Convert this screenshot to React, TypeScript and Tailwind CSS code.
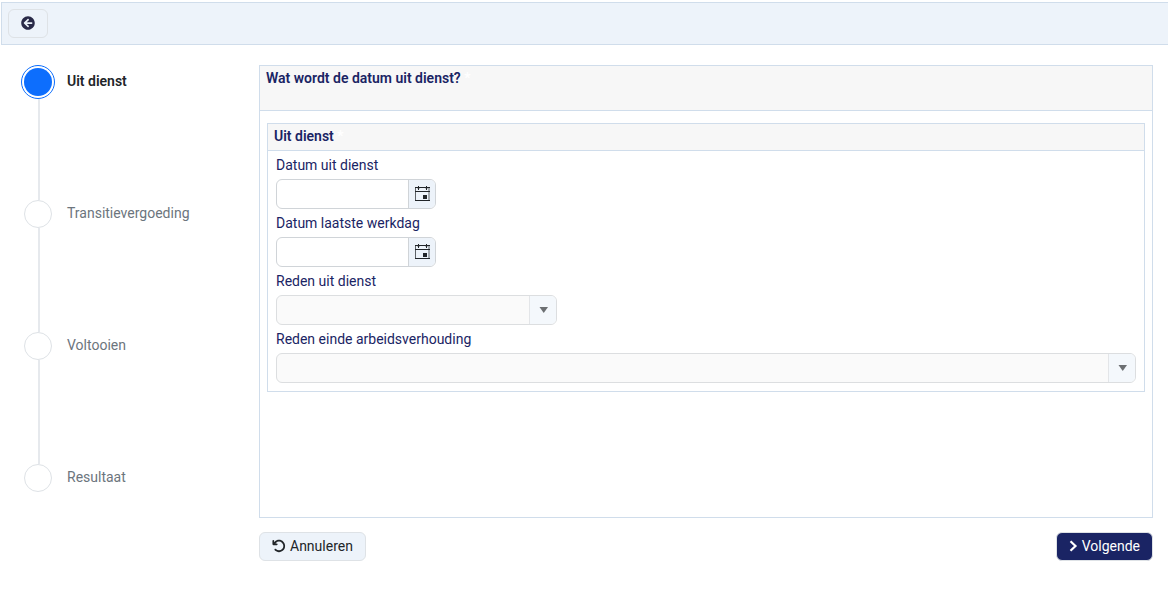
import { useState } from "react";
import { FaArrowCircleLeft } from "react-icons/fa";
import { FaArrowRotateLeft } from "react-icons/fa6";

const steps = ["Uit dienst", "Transitievergoeding", "Voltooien", "Resultaat"];

const CalendarIcon = () => (
  <svg width="16" height="16" viewBox="0 0 16 16" fill="none" aria-hidden="true">
    <path d="M1.5 2v12M15 2v12" stroke="#212529" strokeOpacity="0.7" />
    <path d="M1 1.5h15M1 5.5h15M1 14.5h15" stroke="#212529" />
    <path d="M4.5 0v4M12.5 0v4" stroke="#212529" />
    <path d="M3.5 2.5h2M11.5 2.5h2" stroke="#212529" strokeOpacity="0.5" />
    <path d="M9 9h4v4H9z" fill="#212529" />
  </svg>
);

interface FieldProps {
  id: string;
  label: string;
}

const DateField: React.FC<FieldProps> = ({ id, label }) => {
  const [value, setValue] = useState("");

  return (
    <div>
      <label htmlFor={id} className="block leading-7 text-[#1a2464]">
        {label}
      </label>
      <div className="flex h-[30px] w-40 overflow-hidden rounded-md border border-[#d0d4d8] bg-white">
        <input
          id={id}
          type="text"
          value={value}
          onChange={(e) => setValue(e.target.value)}
          className="min-w-0 flex-1 px-2 outline-none"
        />
        <button
          type="button"
          aria-label={`Kalender ${label}`}
          className="flex w-[27px] items-center justify-center border-l border-[#d0d4d8] bg-[#edf3fa]"
        >
          <CalendarIcon />
        </button>
      </div>
    </div>
  );
};

const SelectField: React.FC<FieldProps & { wide?: boolean }> = ({ id, label, wide }) => (
  <div>
    <label htmlFor={id} className="block leading-7 text-[#1a2464]">
      {label}
    </label>
    <div
      className={`flex h-[30px] overflow-hidden rounded-md border border-[#dcdee0] bg-[#fafafa] ${
        wide ? "w-full" : "w-[281px] max-w-full"
      }`}
    >
      <select id={id} disabled className="min-w-0 flex-1 appearance-none px-2">
        <option value=""></option>
      </select>
      <span className="flex w-[27px] items-center justify-center border-l border-[#e3e5e8] bg-[#f4f8fc]">
        <svg width="10" height="6" viewBox="0 0 10 6" aria-hidden="true">
          <path d="M1.5 0H10L5.75 6z" fill="#6c6f72" />
        </svg>
      </span>
    </div>
  </div>
);

const Stepper = () => (
  <ol className="w-[259px] shrink-0 pl-[21px]">
    {steps.map((step, i) => (
      <li key={step} className="flex gap-3">
        <div className="flex w-[34px] flex-col items-center">
          {i === 0 ? (
            <span className="h-[34px] w-[34px] shrink-0 rounded-full border border-[#0d6efd] p-[2px]">
              <span className="block h-full w-full rounded-full bg-[#0d6efd]"></span>
            </span>
          ) : (
            <span className="h-7 w-7 shrink-0 rounded-full border border-[#dee2e6] bg-white"></span>
          )}
          {i < steps.length - 1 && (
            <span
              className={`ml-[2px] w-[2px] bg-[#e6e9ed] ${i === 0 ? "h-[101px]" : "h-[104px]"}`}
            ></span>
          )}
        </div>
        <span
          className={
            i === 0
              ? "leading-8 font-semibold text-[#212529]"
              : "leading-[26px] text-[#6c757d]"
          }
        >
          {step}
        </span>
      </li>
    ))}
  </ol>
);

const App = () => (
  <div className="min-h-screen bg-white pt-[2px] font-['Roboto',sans-serif] text-sm text-[#212529]">
    <header className="ml-px border border-r-0 border-[#d0ddeb] bg-[#edf3fa] px-[6px] py-[6px]">
      <button
        type="button"
        aria-label="Terug"
        className="flex h-[29px] w-10 items-center justify-center rounded-md border border-[#dee2e6] pb-[2px]"
      >
        <FaArrowCircleLeft size={14} className="text-[#292a48]" />
      </button>
    </header>

    <main className="flex pt-5 pr-[15px]">
      <Stepper />

      <form className="min-w-0 flex-1" onSubmit={(e) => e.preventDefault()}>
        <section className="min-h-[453px] border border-[#d0ddeb]">
          <h1 className="h-[45px] border-b border-[#d0ddeb] bg-[#f7f7f7] px-[6px] leading-6 font-semibold text-[#1a2464]">
            Wat wordt de datum uit dienst? <span className="text-white">*</span>
          </h1>

          <div className="px-[7px] pt-3">
            <section className="border border-[#d0ddeb]">
              <h2 className="h-[27px] border-b border-[#d0ddeb] bg-[#f7f7f7] px-[6px] leading-6 font-semibold text-[#1a2464]">
                Uit dienst <span className="text-white">*</span>
              </h2>
              <div className="px-2 pb-2">
                <DateField id="datum-uit-dienst" label="Datum uit dienst" />
                <DateField id="datum-laatste-werkdag" label="Datum laatste werkdag" />
                <SelectField id="reden-uit-dienst" label="Reden uit dienst" />
                <SelectField id="reden-einde" label="Reden einde arbeidsverhouding" wide />
              </div>
            </section>
          </div>
        </section>

        <div className="flex items-center justify-between pt-[14px]">
          <button
            type="button"
            className="flex h-[29px] items-center gap-1 rounded-md border border-[#dee2e6] bg-[#edf3fa] px-3 pb-[2px]"
          >
            <FaArrowRotateLeft size={14} />
            Annuleren
          </button>
          <button
            type="submit"
            className="flex h-[29px] items-center gap-1 rounded-md border border-[#dee2e6] bg-[#1a2464] px-3 pb-[2px] text-white"
          >
            <svg width="9" height="12" viewBox="0 0 9 12" fill="none" aria-hidden="true">
              <path d="M1.5 1.2L6.5 6l-5 4.8" stroke="currentColor" strokeWidth="2.2" />
            </svg>
            Volgende
          </button>
        </div>
      </form>
    </main>
  </div>
);

export default App;
